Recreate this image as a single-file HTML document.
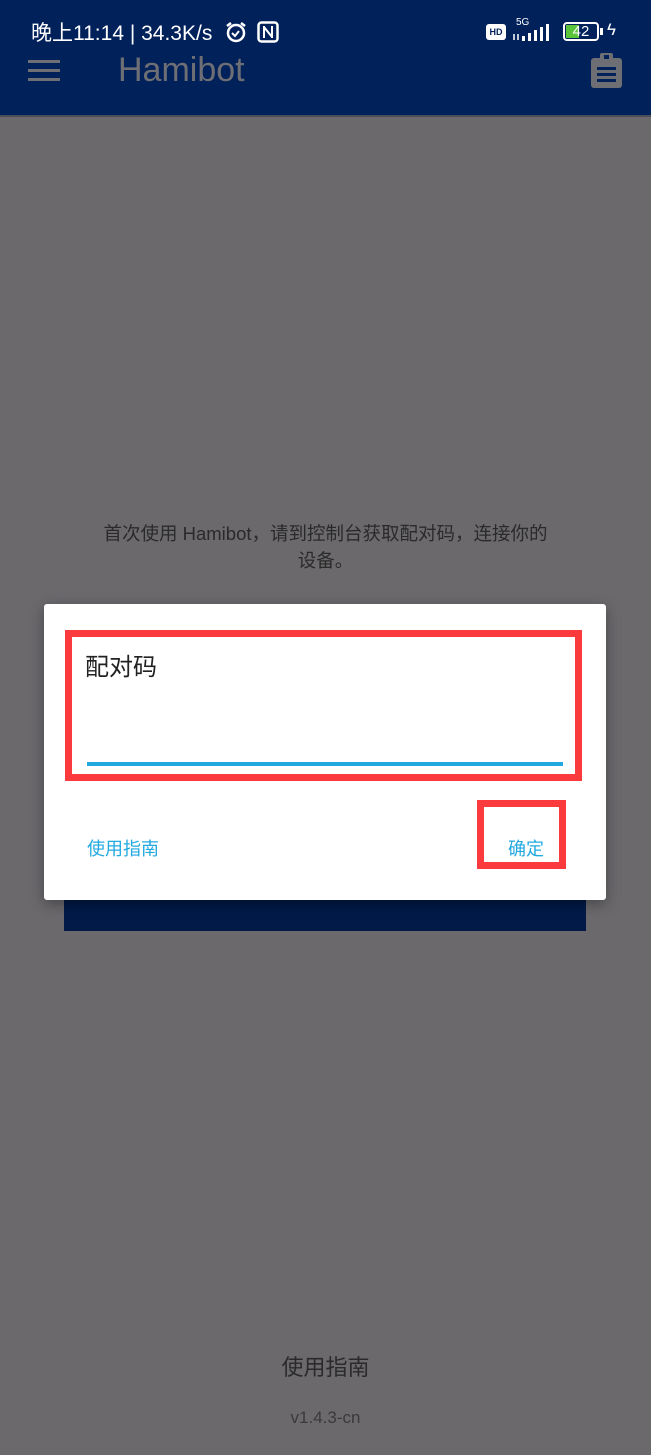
<!DOCTYPE html>
<html><head><meta charset="utf-8"><style>
*{margin:0;padding:0;box-sizing:border-box}
body{width:651px;height:1455px;background:#6b696c;position:relative;overflow:hidden;font-family:"Liberation Sans","Noto Sans CJK SC",sans-serif}
.hdr{position:absolute;left:0;top:0;width:651px;height:117px;background:#01215b;border-bottom:2px solid #4a4d5a}
.abs{position:absolute}
</style></head><body>
<div class="hdr">
 <div class="abs" style="left:31px;top:17px;color:#fff;font-size:21px;white-space:nowrap">晚上11:14 | 34.3K/s</div>
 <svg class="abs" style="left:224px;top:20px" width="24" height="24" viewBox="0 0 24 24"><circle cx="12" cy="13" r="8" fill="none" stroke="#fff" stroke-width="2.5"/><path d="M8 13l3 3 4-5" fill="none" stroke="#fff" stroke-width="2"/><path d="M3 6l4-3M21 6l-4-3" stroke="#fff" stroke-width="2.5"/></svg>
 <svg class="abs" style="left:257px;top:21px" width="22" height="22" viewBox="0 0 22 22"><rect x="1.5" y="1.5" width="19" height="19" rx="3" fill="none" stroke="#fff" stroke-width="2.5"/><path d="M7 5v12M15 5v12M7 6l8 10" stroke="#fff" stroke-width="2" fill="none"/></svg>
 <div class="abs" style="left:486px;top:24px;width:20px;height:16px;background:#fff;border-radius:3px;font-size:9px;color:#01215b;text-align:center;line-height:16px;font-weight:bold">HD</div>
 <div class="abs" style="left:516px;top:17px;color:#fff;font-size:10px">5G</div>
 <svg class="abs" style="left:512px;top:24px" width="42" height="18"><rect x="10" y="12" width="3" height="5" fill="#fff"/><rect x="16" y="9" width="3" height="8" fill="#fff"/><rect x="22" y="6" width="3" height="11" fill="#fff"/><rect x="28" y="3" width="3" height="14" fill="#fff"/><rect x="34" y="0" width="3" height="17" fill="#fff"/><path d="M2 10v6M6 10v6" stroke="#fff" stroke-width="1.5"/></svg>
 <div class="abs" style="left:563px;top:22px;width:36px;height:19px;border:2px solid #fff;border-radius:4px;padding:1px"><div style="width:13px;height:13px;background:#5ac43a"></div></div>
 <div class="abs" style="left:563px;top:22px;width:36px;height:19px;color:#fff;font-size:15px;text-align:center;line-height:19px">42</div>
 <div class="abs" style="left:600px;top:28px;width:3px;height:7px;background:#fff"></div>
 <div class="abs" style="left:607px;top:20px;color:#fff;font-size:17px">ϟ</div>
 <div class="abs" style="left:28px;top:60px;width:32px;height:3px;background:#6e6f74"></div>
 <div class="abs" style="left:28px;top:69px;width:32px;height:3px;background:#6e6f74"></div>
 <div class="abs" style="left:28px;top:78px;width:32px;height:3px;background:#6e6f74"></div>
 <div class="abs" style="left:118px;top:51px;color:#6e6f74;font-size:34px">Hamibot</div>
 <svg class="abs" style="left:590px;top:52px" width="33" height="36" viewBox="0 0 33 36"><rect x="1" y="6" width="31" height="30" rx="3" fill="#6e6f74"/><rect x="10" y="1" width="13" height="9" rx="2" fill="#6e6f74"/><rect x="14" y="3" width="5" height="4" fill="#01215b"/><rect x="7" y="15" width="19" height="3" fill="#01215b"/><rect x="7" y="21" width="19" height="3" fill="#01215b"/><rect x="7" y="27" width="19" height="3" fill="#01215b"/></svg>
</div>
<div class="abs" style="left:0;top:520px;width:651px;color:#2a2a2a;font-size:18.5px;line-height:27px;text-align:center;white-space:nowrap">首次使用 Hamibot，请到控制台获取配对码，连接你的<br>设备。</div>
<div class="abs" style="left:64px;top:880px;width:522px;height:51px;background:#011a48"></div>
<div class="abs" style="left:44px;top:604px;width:562px;height:296px;background:#fff;border-radius:3px;box-shadow:0 4px 14px rgba(0,0,0,.35)"></div>
<div class="abs" style="left:65px;top:630px;width:517px;height:151px;border:7px solid #fb3a3d"></div>
<div class="abs" style="left:85px;top:647px;color:#222;font-size:24px">配对码</div>
<div class="abs" style="left:87px;top:762px;width:476px;height:4px;background:#22a9e0"></div>
<div class="abs" style="left:87px;top:835px;color:#22a9e0;font-size:18px">使用指南</div>
<div class="abs" style="left:477px;top:800px;width:89px;height:69px;border:7px solid #fb3a3d"></div>
<div class="abs" style="left:508px;top:835px;color:#22a9e0;font-size:18px">确定</div>
<div class="abs" style="left:0;top:1350px;width:651px;text-align:center;color:#2a2a2a;font-size:22px">使用指南</div>
<div class="abs" style="left:0;top:1408px;width:651px;text-align:center;color:#3a3a3a;font-size:17px">v1.4.3-cn</div>
</body></html>
